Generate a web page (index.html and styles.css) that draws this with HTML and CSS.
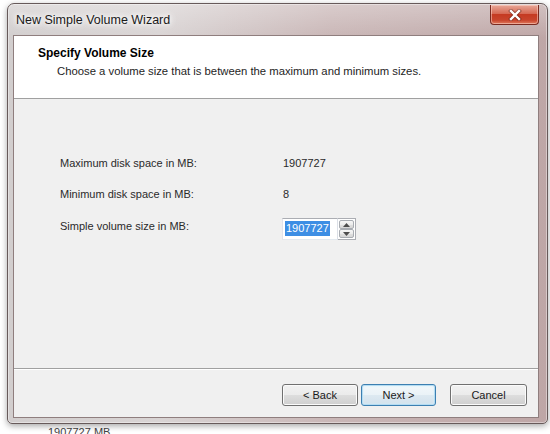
FILE: index.html
```html
<!DOCTYPE html>
<html>
<head>
<meta charset="utf-8">
<link rel="stylesheet" href="styles.css">
</head>
<body>
<div class="window">
  <div class="titlebar">
    <span class="title">New Simple Volume Wizard</span>
    <div class="close">
      <svg width="14" height="12" viewBox="0 0 14 12">
        <path d="M3 2 L11 10 M11 2 L3 10" stroke="#5a1a10" stroke-width="4" stroke-linecap="square" fill="none" opacity="0.55"/>
        <path d="M3 2 L11 10 M11 2 L3 10" stroke="#ffffff" stroke-width="2.4" stroke-linecap="square" fill="none"/>
      </svg>
    </div>
  </div>
  <div class="client">
    <div class="header">
      <div class="h-title">Specify Volume Size</div>
      <div class="h-sub">Choose a volume size that is between the maximum and minimum sizes.</div>
    </div>
    <div class="content">
      <div class="form">
        <div class="label">Maximum disk space in MB:</div>
        <div class="value">1907727</div>
        <div class="label">Minimum disk space in MB:</div>
        <div class="value">8</div>
        <div class="label label-spin">Simple volume size in MB:</div>
        <div class="spin">
          <div class="spin-field"><span class="sel">1907727</span></div>
          <div class="spin-btns">
            <div class="spin-btn"><svg width="7" height="4" viewBox="0 0 7 4"><path d="M0 4 L3.5 0 L7 4 Z" fill="#4d4d4d"/></svg></div>
            <div class="spin-btn"><svg width="7" height="4" viewBox="0 0 7 4"><path d="M0 0 L3.5 4 L7 0 Z" fill="#4d4d4d"/></svg></div>
          </div>
        </div>
      </div>
    </div>
    <div class="footer">
      <button class="btn btn-back">&lt; Back</button>
      <button class="btn btn-next">Next &gt;</button>
      <button class="btn btn-cancel">Cancel</button>
    </div>
  </div>
</div>
<div class="behind">1907727 MB</div>
</body>
</html>
```

FILE: styles.css
```css
html, body {
  margin: 0;
  padding: 0;
}
body {
  width: 550px;
  height: 434px;
  overflow: hidden;
  background: #ffffff;
  font-family: "Liberation Sans", Arial, sans-serif;
  font-size: 11px;
  color: #1e1e1e;
}
.window {
  box-sizing: border-box;
  margin: 3px 0 0 7px;
  width: 541px;
  height: 421px;
  border: 1px solid #675a5a;
  border-radius: 7px 7px 5px 5px;
  padding: 0 9px 6px 6px;
  background:
    linear-gradient(180deg, rgba(255,255,255,0.3) 0px, rgba(255,255,255,0) 34px),
    linear-gradient(90deg, #d2cece 0%, #d9d4d4 28%, #c9b6b6 60%, #bea6a6 100%);
  box-shadow: 0 2px 6px rgba(0,0,0,0.35), inset 0 0 0 1px rgba(255,255,255,0.4);
  position: relative;
}
.titlebar {
  height: 32px;
  display: flex;
  align-items: center;
  justify-content: space-between;
}
.title {
  padding-left: 2px;
  font-size: 12.5px;
  color: #1a1a1a;
  text-shadow: 0 0 8px #ffffff, 0 0 8px #ffffff, 0 0 4px #ffffff;
}
.close {
  align-self: flex-start;
  margin-top: 1px;
  margin-right: -1px;
  width: 49px;
  height: 20px;
  box-sizing: border-box;
  border: 1px solid #7a2a20;
  border-top: none;
  border-radius: 0 0 4px 4px;
  background: linear-gradient(180deg, #e8a797 0%, #d66a55 45%, #c53a22 50%, #c8452d 80%, #e07b5e 100%);
  box-shadow: inset 0 0 0 1px rgba(255,220,210,0.5);
  display: flex;
  align-items: center;
  justify-content: center;
}
.client {
  height: 381px;
  display: flex;
  flex-direction: column;
  background: #f0f0f0;
  box-shadow: 0 0 0 1px #8f7e7e;
}
.header {
  flex: none;
  background: #ffffff;
  border-bottom: 1px solid #a0a0a0;
  padding: 10px 0 0 24px;
  height: 52px;
}
.h-title {
  font-weight: bold;
  font-size: 12px;
  line-height: 15px;
  color: #000000;
}
.h-sub {
  margin-top: 3px;
  margin-left: 19px;
  line-height: 14px;
  font-size: 11.3px;
  color: #1e1e1e;
}
.content {
  height: 269px;
  flex: none;
  box-sizing: border-box;
  padding: 57px 0 0 46px;
}
.form {
  display: grid;
  grid-template-columns: 222px auto;
  row-gap: 17px;
  align-items: start;
}
.label, .value {
  line-height: 14px;
  color: #2a2a2a;
}
.value {
  padding-left: 1px;
}
.label-spin {
  margin-top: 1px;
}
.spin {
  display: flex;
  width: 74px;
  height: 22px;
}
.spin-field {
  box-sizing: border-box;
  width: 56px;
  height: 22px;
  background: #ffffff;
  border: 1px solid #abadb3;
  border-right-color: #dbdfe6;
  border-bottom-color: #e3e9ef;
  border-left-color: #e2e3ea;
  padding: 2px 0 0 2px;
}
.sel {
  display: inline-block;
  background: #3d8ee4;
  color: #ffffff;
  line-height: 15px;
  padding: 0 1px;
}
.spin-btns {
  width: 18px;
  display: flex;
  flex-direction: column;
  background: #ffffff;
  border: 1px solid #abadb3;
  border-left: none;
  box-sizing: border-box;
  padding: 1px;
}
.spin-btn {
  flex: 1;
  box-sizing: border-box;
  border: 1px solid #a8acb2;
  border-radius: 2px;
  background: linear-gradient(180deg, #f6f6f6 0%, #ececec 50%, #e0e0e0 51%, #d6d6d6 100%);
  display: flex;
  align-items: center;
  justify-content: center;
}
.footer {
  flex: 1;
  border-top: 1px solid #a0a0a0;
  box-shadow: inset 0 1px 0 #ffffff;
  display: flex;
  justify-content: flex-end;
  align-items: flex-start;
  gap: 3px;
  padding: 15px 11px 0 0;
}
.btn {
  box-sizing: border-box;
  height: 22px;
  width: 75px;
  margin: 0;
  padding: 0;
  border: 1px solid #707070;
  border-radius: 3px;
  background: linear-gradient(180deg, #f2f2f2 0%, #ebebeb 50%, #dddddd 51%, #cfcfcf 100%);
  box-shadow: inset 0 0 0 1px #fbfbfb;
  font-family: "Liberation Sans", Arial, sans-serif;
  font-size: 11px;
  color: #1a1a1a;
}
.btn-back {
  width: 76px;
}
.btn-cancel {
  width: 77px;
  margin-left: 11px;
}
.btn-next {
  border-color: #3c7fb1;
  background: linear-gradient(180deg, #f2f8fb 0%, #eaf2f7 50%, #dde9f1 51%, #d2e1ec 100%);
  box-shadow: inset 0 0 0 1px #b4dcf2, inset 0 0 2px 1px #d6eefa;
}
.behind {
  padding: 2px 0 0 48px;
  font-size: 11px;
  line-height: 12px;
  color: #444444;
}
```
